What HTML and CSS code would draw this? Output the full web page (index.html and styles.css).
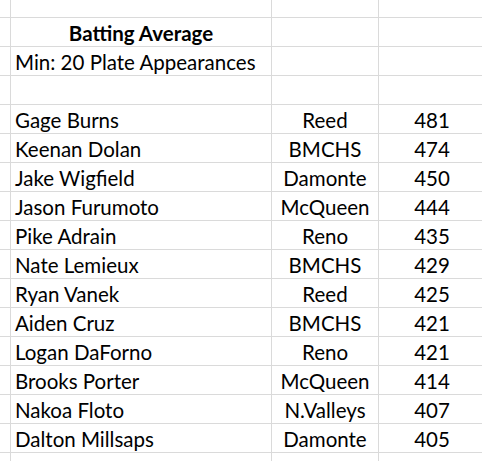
FILE: index.html
```html
<!DOCTYPE html>
<html lang="en">
<head>
    <meta charset="UTF-8">
    <meta name="viewport" content="width=device-width, initial-scale=1.0">
    <title>Batting Average</title>
    <link rel="stylesheet" href="styles.css">
</head>
<body>
    <div class="hoja">
        <!-- fila parcial de arriba -->
        <div class="celda"></div><div class="celda"></div><div class="celda"></div><div class="celda"></div>

        <div class="celda"></div><div class="celda centro titulo">Batting Average</div><div class="celda"></div><div class="celda"></div>
        <div class="celda"></div><div class="celda">Min: 20 Plate Appearances</div><div class="celda"></div><div class="celda"></div>
        <div class="celda"></div><div class="celda"></div><div class="celda"></div><div class="celda"></div>

        <div class="celda"></div><div class="celda">Gage Burns</div><div class="celda centro">Reed</div><div class="celda centro">481</div>
        <div class="celda"></div><div class="celda">Keenan Dolan</div><div class="celda centro">BMCHS</div><div class="celda centro">474</div>
        <div class="celda"></div><div class="celda">Jake Wigfield</div><div class="celda centro">Damonte</div><div class="celda centro">450</div>
        <div class="celda"></div><div class="celda">Jason Furumoto</div><div class="celda centro">McQueen</div><div class="celda centro">444</div>
        <div class="celda"></div><div class="celda">Pike Adrain</div><div class="celda centro">Reno</div><div class="celda centro">435</div>
        <div class="celda"></div><div class="celda">Nate Lemieux</div><div class="celda centro">BMCHS</div><div class="celda centro">429</div>
        <div class="celda"></div><div class="celda">Ryan Vanek</div><div class="celda centro">Reed</div><div class="celda centro">425</div>
        <div class="celda"></div><div class="celda">Aiden Cruz</div><div class="celda centro">BMCHS</div><div class="celda centro">421</div>
        <div class="celda"></div><div class="celda">Logan DaForno</div><div class="celda centro">Reno</div><div class="celda centro">421</div>
        <div class="celda"></div><div class="celda">Brooks Porter</div><div class="celda centro">McQueen</div><div class="celda centro">414</div>
        <div class="celda"></div><div class="celda">Nakoa Floto</div><div class="celda centro">N.Valleys</div><div class="celda centro">407</div>
        <div class="celda"></div><div class="celda">Dalton Millsaps</div><div class="celda centro">Damonte</div><div class="celda centro">405</div>
        <div class="celda"></div><div class="celda"></div><div class="celda"></div><div class="celda"></div>
    </div>
</body>
</html>
```
FILE: styles.css
```css
html, body {
    margin: 0;
    padding: 0;
    background-color: white;
    overflow: hidden;
}

.hoja {
    display: grid;
    grid-template-columns: 11px 261px 107px 107px;
    grid-template-rows: 18px;
    grid-auto-rows: 29px;
    font-family: Lato, "Open Sans", sans-serif;
    font-size: 20.5px;
    color: #000;
}

.celda {
    box-sizing: border-box;
    border-right: 1px solid #dadada;
    border-bottom: 1px solid #dadada;
    padding: 0 4px 2px 4px;
    display: flex;
    align-items: flex-end;
    white-space: nowrap;
    line-height: 22px;
}

.centro {
    justify-content: center;
}

.titulo {
    font-weight: bold;
}
```
